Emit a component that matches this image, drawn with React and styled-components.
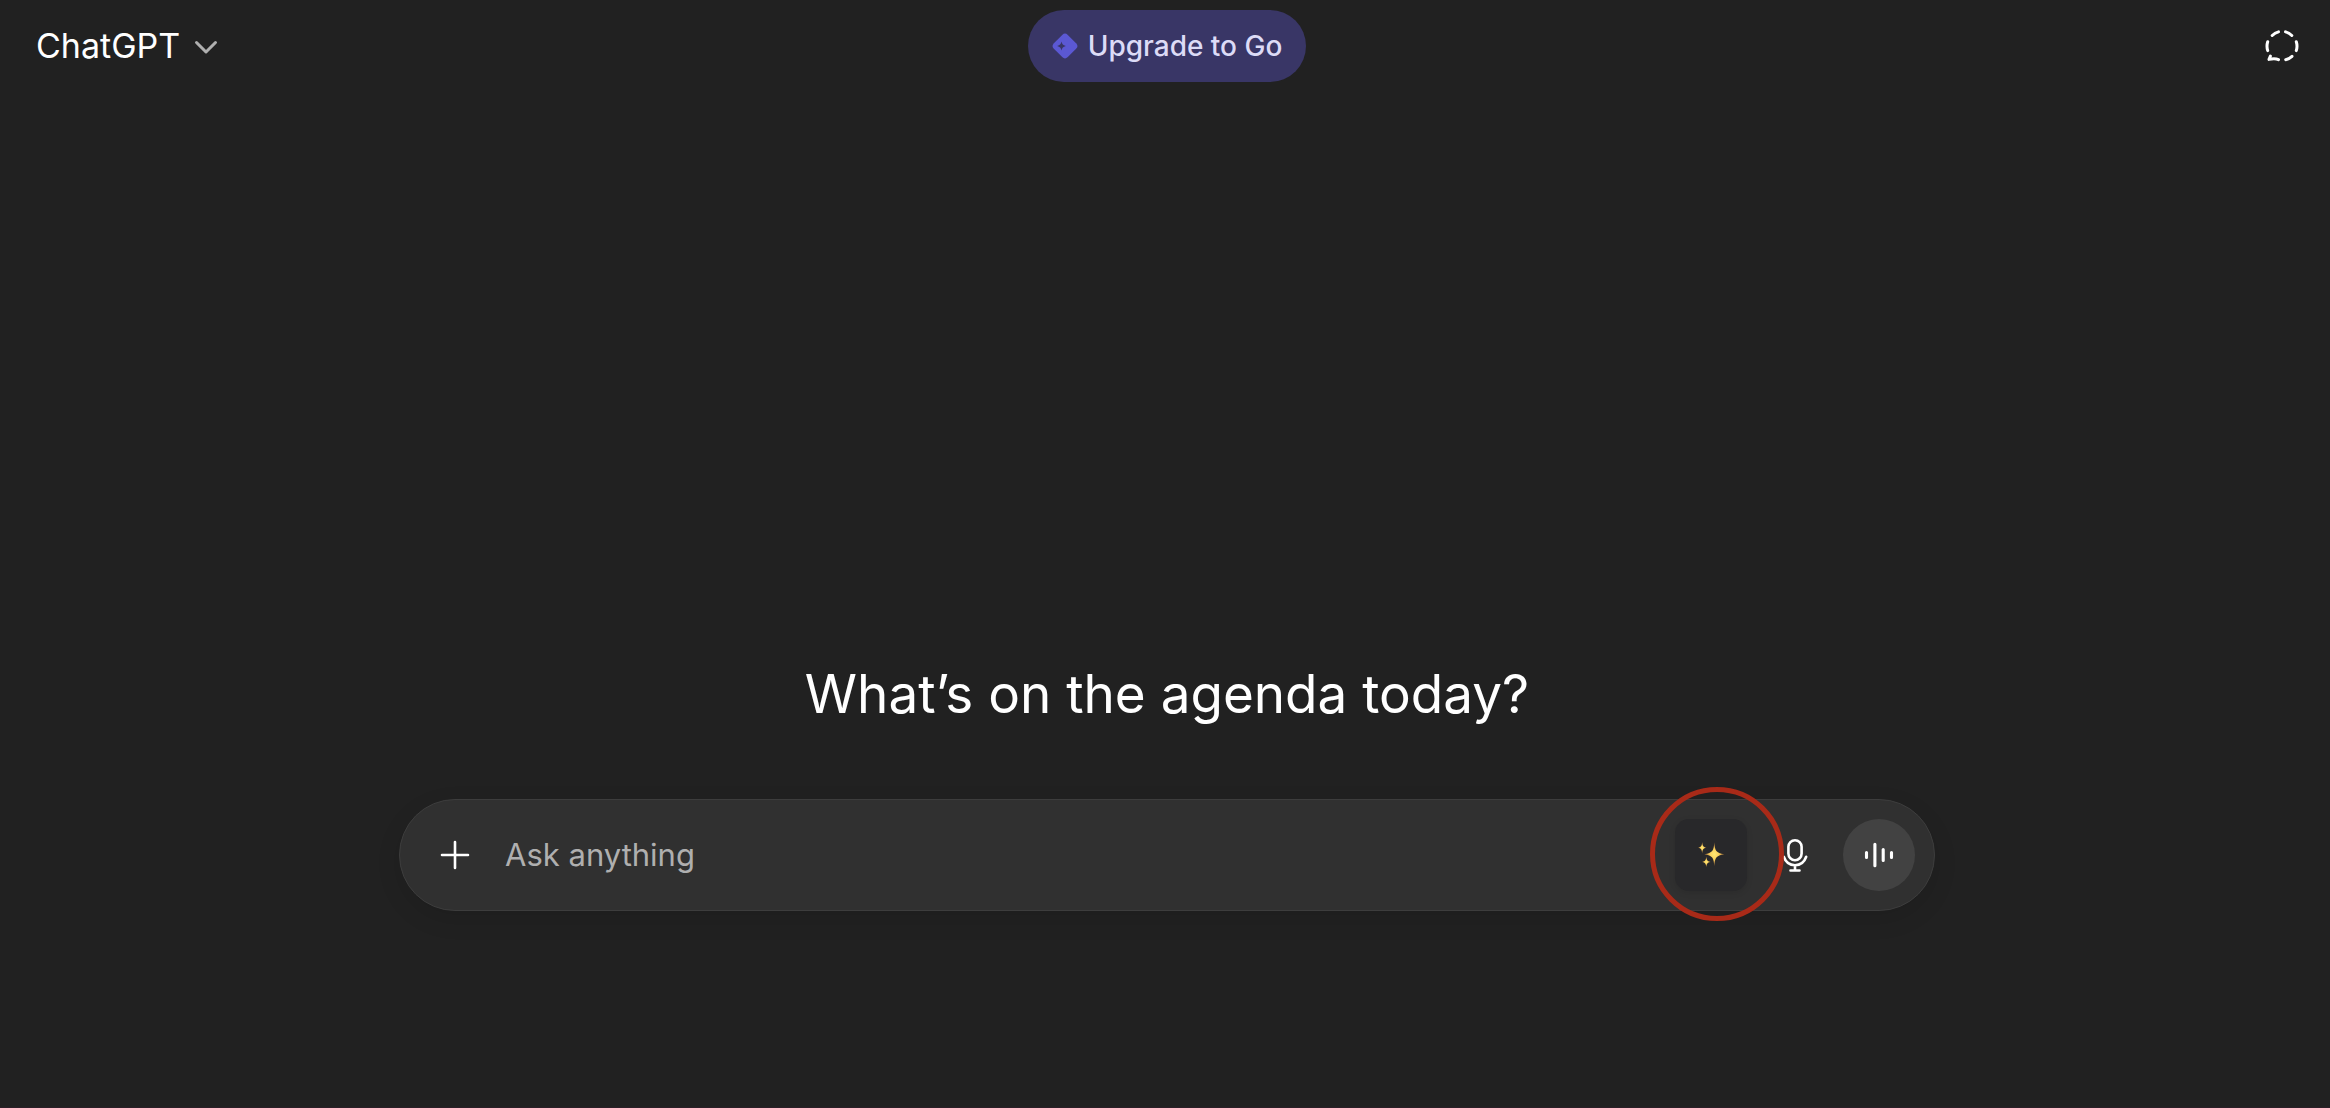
import React, { useState } from 'react';
import styled, { createGlobalStyle } from 'styled-components';

const GlobalStyle = createGlobalStyle`
  * {
    box-sizing: border-box;
  }

  body {
    margin: 0;
    background: #212121;
    color: #fff;
    font-family: Inter, 'Liberation Sans', sans-serif;
  }

  button,
  input {
    font: inherit;
    color: inherit;
  }
`;

// Layout
const Page = styled.div`
  display: flex;
  flex-direction: column;
  min-height: 100vh;
  padding-left: 4px;
  border-bottom: 1px solid #2b1f27;
`;

const Header = styled.header`
  display: grid;
  grid-template-columns: 1fr auto 1fr;
  align-items: center;
  padding: 10px 12px;
`;

const HeaderSide = styled.div`
  display: flex;
  justify-content: ${({ $end }) => ($end ? 'flex-end' : 'flex-start')};
`;

const Main = styled.main`
  flex: 1;
  display: flex;
  flex-direction: column;
  align-items: center;
  padding: 568px 24px 48px;
`;

// Header parts
const ModelButton = styled.button`
  display: flex;
  align-items: center;
  gap: 14px;
  height: 72px;
  padding: 0 20px;
  border: none;
  border-radius: 16px;
  background: transparent;
  font-size: 34px;
  line-height: 56px;
  cursor: pointer;

  &:hover {
    background: #2f2f2f;
  }
`;

const UpgradeButton = styled.button`
  display: flex;
  align-items: center;
  gap: 10px;
  height: 72px;
  padding: 0 24px;
  border: none;
  border-radius: 36px;
  background: #393666;
  color: #dcdbf6;
  font-size: 28px;
  font-weight: 500;
  line-height: 40px;
  white-space: nowrap;
  cursor: pointer;

  &:hover {
    background: #433f7a;
  }
`;

const IconButton = styled.button`
  display: flex;
  flex: none;
  align-items: center;
  justify-content: center;
  width: 72px;
  height: 72px;
  padding: 0;
  border: none;
  border-radius: ${({ $square }) => ($square ? '14px' : '50%')};
  background: ${({ $bg }) => $bg || 'transparent'};
  box-shadow: ${({ $square }) => ($square ? '0 2px 6px rgba(0, 0, 0, 0.1)' : 'none')};
  cursor: pointer;
`;

// Prompt
const Title = styled.h1`
  margin: 0 0 71px;
  font-size: 53px;
  font-weight: 400;
  line-height: 68px;
  text-align: center;
`;

const Composer = styled.form`
  display: flex;
  align-items: center;
  gap: 12px;
  width: 100%;
  max-width: 1536px;
  height: 112px;
  padding: 0 19px;
  border: 1px solid #3d3d3d;
  border-radius: 56px;
  background: #303030;
  box-shadow: 0 8px 24px rgba(0, 0, 0, 0.1);
`;

const PromptInput = styled.input`
  flex: 1;
  min-width: 0;
  padding: 0 2px;
  border: none;
  outline: none;
  background: transparent;
  font-size: 31px;
  line-height: 48px;

  &::placeholder {
    color: #afafaf;
    opacity: 1;
  }
`;

const Highlighted = styled.div`
  position: relative;
  display: flex;
`;

// Ring drawn over the composer, around the sparkle button
const Ring = styled.span`
  position: absolute;
  top: -32px;
  left: -25px;
  width: 134px;
  height: 134px;
  border: 5px solid #a82a18;
  border-radius: 50%;
  pointer-events: none;
`;

// Icons
const ChevronIcon = () => (
  <svg width="24" height="24" viewBox="0 0 24 24" fill="none" stroke="#afafaf" strokeWidth="3" strokeLinecap="round" strokeLinejoin="round" aria-hidden="true">
    <path d="M2.5 8.500 12 18l9.500-9.500" />
  </svg>
);

const DiamondIcon = () => (
  <svg width="26" height="26" viewBox="0 0 26 26" aria-hidden="true">
    <path fill="#5b58d3" d="M10.200 1.900a4 4 0 0 1 5.600 0l8.300 8.300a4 4 0 0 1 0 5.600l-8.300 8.300a4 4 0 0 1-5.600 0l-8.300-8.300a4 4 0 0 1 0-5.600z" />
    <path fill="#393666" d="M9.500 8.500c.7 2.800 1.500 3.700 4.300 4.500-2.800.8-3.600 1.700-4.300 4.500-.7-2.800-1.500-3.700-4.300-4.500 2.800-.8 3.600-1.700 4.300-4.500z" />
  </svg>
);

const TemporaryChatIcon = () => (
  <svg width="40" height="40" viewBox="0 0 40 40" fill="none" stroke="#fff" strokeWidth="3" strokeLinecap="round" strokeLinejoin="round" aria-hidden="true">
    <path d="M10.200 9.500A14.500 14.500 0 0 1 16.500 5.900M23.500 5.900a14.500 14.500 0 0 1 6.300 3.600M34.300 15.800a14.500 14.500 0 0 1 0 8.800M30 30.300a14.500 14.500 0 0 1-6.300 3.400M16.500 33.700c-2-.9-4.500-1.300-9.500-.3l1.400-3.300M5.700 24.600a14.500 14.500 0 0 1 0-8.800" />
  </svg>
);

const PlusIcon = () => (
  <svg width="30" height="30" viewBox="0 0 30 30" stroke="#fff" strokeWidth="2.6" strokeLinecap="round" aria-hidden="true">
    <path d="M15 2v26M2 15h26" />
  </svg>
);

const SparklesIcon = () => (
  <svg width="28" height="28" viewBox="0 0 28 28" aria-hidden="true">
    <defs>
      <radialGradient id="sparkle">
        <stop offset="0" stopColor="#ffe873" />
        <stop offset="0.45" stopColor="#f9cf5c" />
        <stop offset="1" stopColor="#b0743a" />
      </radialGradient>
    </defs>
    <g fill="url(#sparkle)">
      <path d="M17.300 1.200c.6 8.600 1.700 10.600 10 12-8.300 1.400-9.400 3.400-10 12-.6-8.600-1.700-10.600-10-12 8.300-1.400 9.400-3.400 10-12z" />
      <path d="M5.200 1c.4 4 1 5 4.200 5.700-3.200.7-3.800 1.700-4.200 5.700-.4-4-1-5-4.200-5.700C4.200 6 4.800 5 5.200 1z" />
      <path d="M9.300 15.500c.4 3.800 1 4.700 4.200 5.400-3.200.7-3.800 1.600-4.200 5.400-.4-3.800-1-4.700-4.200-5.400 3.200-.7 3.800-1.600 4.200-5.400z" />
    </g>
  </svg>
);

const MicIcon = () => (
  <svg width="28" height="36" viewBox="0 0 28 36" fill="none" stroke="#fff" strokeWidth="2.6" strokeLinecap="round" aria-hidden="true">
    <rect x="7.4" y="3.2" width="13.2" height="20" rx="6.6" />
    <path d="M2.800 19.800C4.500 24.700 8.700 28.200 14 28.200s9.500-3.500 11.200-8.400M14 28.400v5M9.500 33.500h9" />
  </svg>
);

const VoiceIcon = () => (
  <svg width="32" height="28" viewBox="0 0 32 28" stroke="#fff" strokeWidth="3.1" strokeLinecap="round" aria-hidden="true">
    <path d="M3.500 11.500v5M11.900 3.200v21.600M20.200 8.600v10.800M28.500 11.500v5" />
  </svg>
);

// Component
const App = () => {
  const [prompt, setPrompt] = useState('');

  const handleSubmit = (e) => {
    e.preventDefault();
    setPrompt('');
  };

  return (
    <>
      <GlobalStyle />
      <Page>
        <Header>
          <HeaderSide>
            <ModelButton type="button">
              ChatGPT
              <ChevronIcon />
            </ModelButton>
          </HeaderSide>
          <UpgradeButton type="button">
            <DiamondIcon />
            Upgrade to Go
          </UpgradeButton>
          <HeaderSide $end>
            <IconButton type="button" aria-label="Temporary chat">
              <TemporaryChatIcon />
            </IconButton>
          </HeaderSide>
        </Header>
        <Main>
          <Title>What’s on the agenda today?</Title>
          <Composer onSubmit={handleSubmit}>
            <IconButton type="button" aria-label="Add files">
              <PlusIcon />
            </IconButton>
            <PromptInput
              type="text"
              aria-label="Ask anything"
              placeholder="Ask anything"
              value={prompt}
              onChange={(e) => setPrompt(e.target.value)}
            />
            <Highlighted>
              <IconButton type="button" aria-label="Improve prompt" $square $bg="#28282a">
                <SparklesIcon />
              </IconButton>
              <Ring />
            </Highlighted>
            <IconButton type="button" aria-label="Dictate">
              <MicIcon />
            </IconButton>
            <IconButton type="button" aria-label="Use voice mode" $bg="#424242">
              <VoiceIcon />
            </IconButton>
          </Composer>
        </Main>
      </Page>
    </>
  );
};

export default App;
